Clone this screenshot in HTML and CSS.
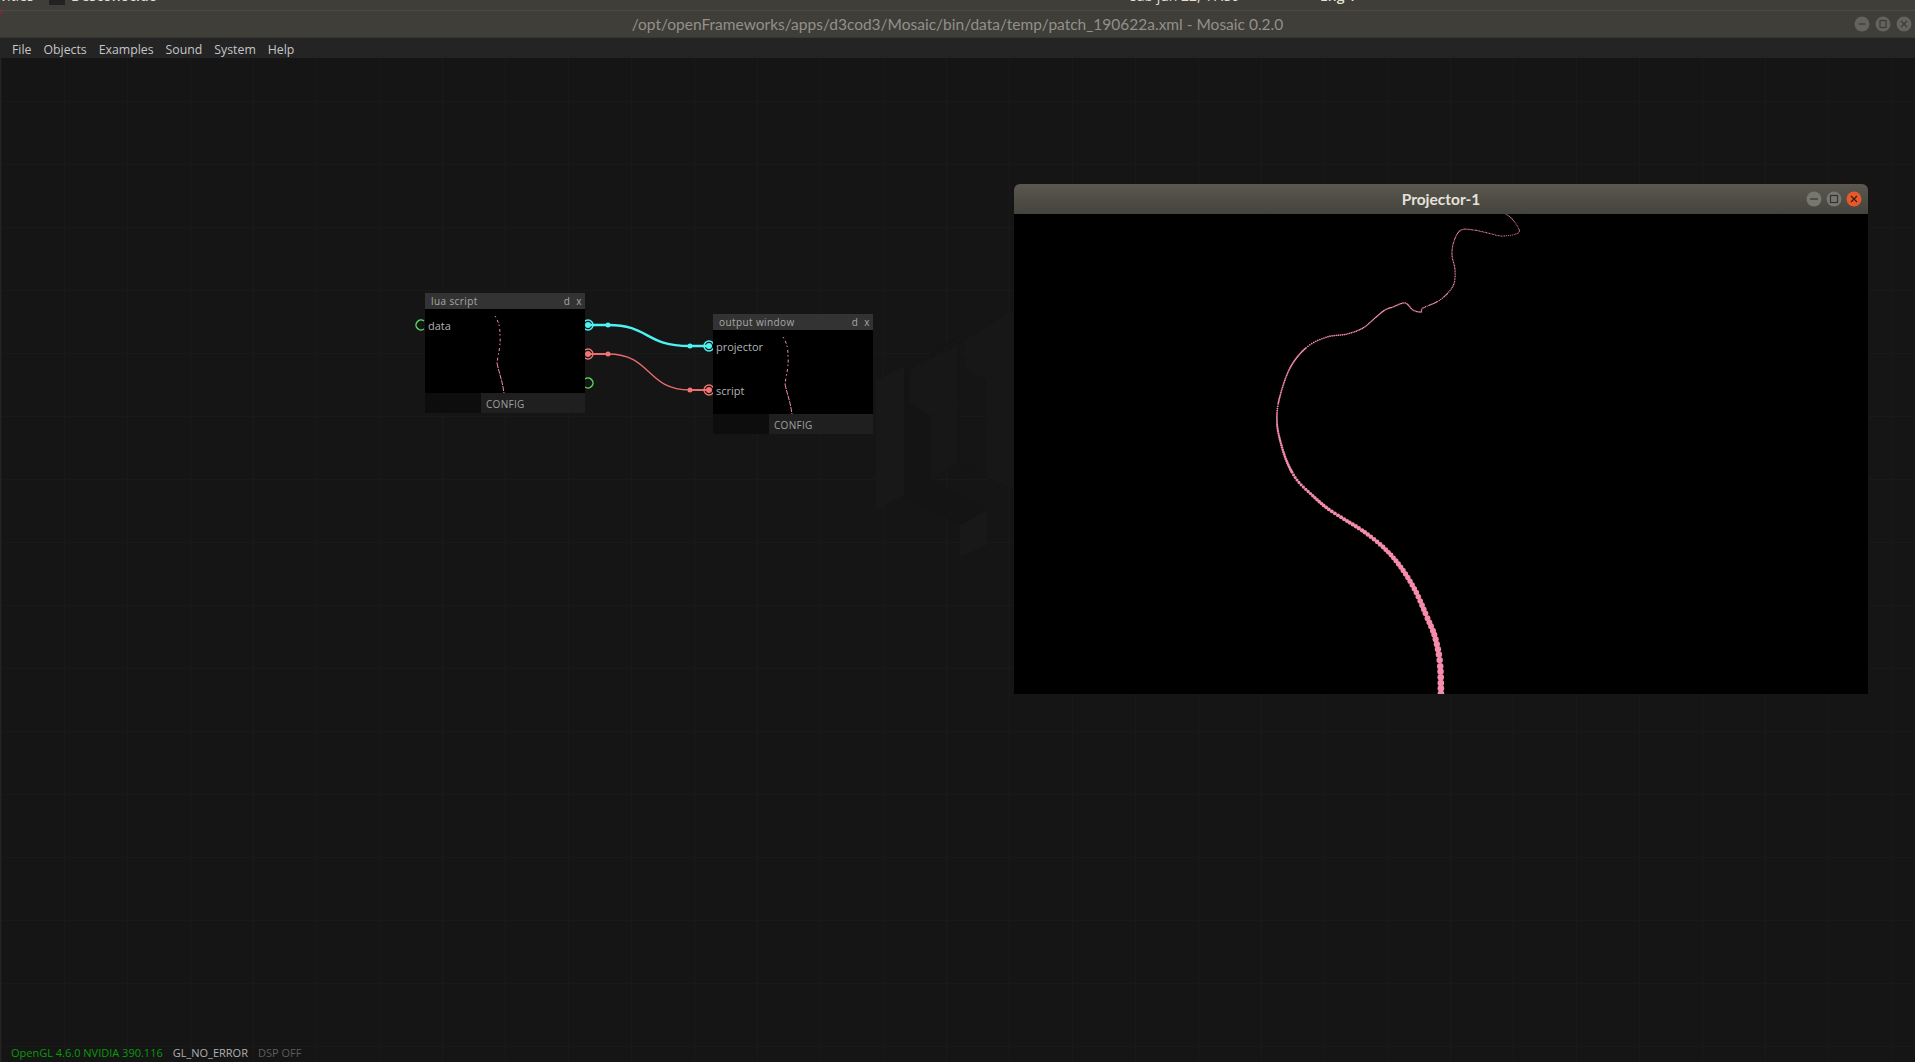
FILE: index.html
```html
<!DOCTYPE html>
<html lang="en">
<head>
  <meta charset="UTF-8">
  <title>Mosaic 0.2.0</title>
  <link rel="stylesheet" href="styles.css">
</head>
<body>
  <div class="toppanel">
    <span class="panel-left">vities</span>
    <span class="panel-icon"></span>
    <span class="panel-app">Desconocido</span>
    <span class="panel-clock">sáb jun 22, 17:39</span>
    <span class="panel-tray">Eng 1</span>
  </div>

  <div class="titlebar">
    <span class="titlebar-text">/opt/openFrameworks/apps/d3cod3/Mosaic/bin/data/temp/patch_190622a.xml - Mosaic 0.2.0</span>
    <div class="wm-buttons">
      <svg class="wm-btn" viewBox="0 0 16 16"><circle cx="8" cy="8" r="7.5" fill="#64635d"/><path d="M4.5 8h7" stroke="#3c3b37" stroke-width="1.2"/></svg>
      <svg class="wm-btn" viewBox="0 0 16 16"><circle cx="8" cy="8" r="7.5" fill="#64635d"/><rect x="5" y="4.5" width="6" height="7" fill="none" stroke="#3c3b37" stroke-width="1.2"/></svg>
      <svg class="wm-btn" viewBox="0 0 16 16"><circle cx="8" cy="8" r="7.5" fill="#64635d"/><path d="M5 5l6 6M11 5l-6 6" stroke="#3c3b37" stroke-width="1.2"/></svg>
    </div>
  </div>

  <nav class="menubar">
    <span>File</span>
    <span>Objects</span>
    <span>Examples</span>
    <span>Sound</span>
    <span>System</span>
    <span>Help</span>
  </nav>

  <main class="canvas">
    <!-- faint logo behind the patch -->
    <svg class="overlay" viewBox="0 58 1915 1004">
      <polygon points="876,381 904,366 904,495 876,510" fill="#181818"/>
      <polygon points="904,495 904,369 910,369 910,403 931,416 931,479 958,462 958,345 960,335 931,352 931,358 960,336 960,462 986,478 986,470 1014,455 1014,490 986,478 958,462 931,479 986,510 960,525 904,495" fill="#141414"/>
      <polygon points="931,416 958,400 958,462 931,479" fill="#171717"/>
      <polygon points="910,369 931,358 958,345 958,400 931,416 910,403" fill="#171717"/>
      <polygon points="965,340 985,328 1014,310 1014,490 987,478 987,380 965,368" fill="#171717"/>
      <polygon points="960,525 987,510 987,545 960,557" fill="#181818"/>
    </svg>

    <svg class="overlay wires" viewBox="0 58 1915 1004">
      <path d="M424 321A5 5 0 1 0 424 329" class="pin-green"/>
      <path d="M585 379A5 5 0 1 1 585 387" class="pin-green"/>

      <path d="M588 325H608C650 325 644 346 690 346H708" class="wire-cyan"/>
      <circle cx="588" cy="325" r="5" class="ring-cyan"/>
      <circle cx="588" cy="325" r="3" fill="#4ff2f2"/>
      <circle cx="608" cy="325" r="2.5" fill="#4ff2f2"/>
      <circle cx="690" cy="346" r="2.5" fill="#4ff2f2"/>
      <circle cx="709" cy="346" r="5" class="ring-cyan"/>
      <circle cx="709" cy="346" r="3" fill="#4ff2f2"/>

      <path d="M588 354H608C652 354 646 390 690 390H709" class="wire-red"/>
      <path d="M590 354H608M690 390H706" class="wire-red-end"/>
      <circle cx="588" cy="354" r="5" class="ring-red"/>
      <circle cx="588" cy="354" r="3" fill="#f27474"/>
      <circle cx="608" cy="354" r="2.5" fill="#f27474"/>
      <circle cx="690" cy="390" r="2.5" fill="#f27474"/>
      <circle cx="709" cy="390" r="5" class="ring-red"/>
      <circle cx="709" cy="390" r="3" fill="#f27474"/>
    </svg>

    <section class="node node-lua">
      <header class="node-head"><span>lua script</span><span class="node-ctrl"><span>d</span><span>x</span></span></header>
      <div class="node-body">
        <span class="pin-label">data</span>
        <svg class="preview" viewBox="0 0 160 84">
          <path class="preview-far" d="M70 7C73 12 75 16 75 26C76 36 73 46 72 54"/>
          <path class="preview-near" d="M72 54C74 64 77 70 79 84"/>
        </svg>
      </div>
      <footer class="node-foot"><span class="foot-blank"></span><span class="foot-config">CONFIG</span></footer>
    </section>

    <section class="node node-output">
      <header class="node-head"><span>output window</span><span class="node-ctrl"><span>d</span><span>x</span></span></header>
      <div class="node-body">
        <span class="pin-label">projector</span>
        <span class="pin-label">script</span>
        <svg class="preview" viewBox="0 0 160 84">
          <path class="preview-far" d="M70 7C73 12 75 16 75 26C76 36 73 46 72 54"/>
          <path class="preview-near" d="M72 54C74 64 77 70 79 84"/>
        </svg>
      </div>
      <footer class="node-foot"><span class="foot-blank"></span><span class="foot-config">CONFIG</span></footer>
    </section>

    <section class="projector">
      <header class="projector-head">
        <span class="projector-title">Projector-1</span>
        <div class="projector-buttons">
          <svg class="wm-btn" viewBox="0 0 16 16"><circle cx="8" cy="8" r="7.5" fill="#77766f"/><path d="M4 8h8" stroke="#34332f" stroke-width="1.2"/></svg>
          <svg class="wm-btn" viewBox="0 0 16 16"><circle cx="8" cy="8" r="7.5" fill="#77766f"/><rect x="4.5" y="4.5" width="7" height="7" fill="none" stroke="#34332f" stroke-width="1.2"/></svg>
          <svg class="wm-btn" viewBox="0 0 16 16"><circle cx="8" cy="8" r="7.5" fill="#e9582b"/><path d="M5 5l6 6M11 5l-6 6" stroke="#34220f" stroke-width="1.3"/></svg>
        </div>
      </header>
      <svg id="trail" class="projector-view" viewBox="1014 214 854 480"></svg>
    </section>

    <footer class="statusbar">
      <span class="status-gl">OpenGL 4.6.0 NVIDIA 390.116</span>
      <span class="status-err">GL_NO_ERROR</span>
      <span class="status-dsp">DSP OFF</span>
    </footer>
  </main>

  <script src="trail.js"></script>
</body>
</html>
```

FILE: styles.css
```css
html,body{
    height: 100%;
    margin: 0;
}
body{
    display: flex;
    flex-direction: column;
    overflow: hidden;
    background: #151515;
    font-family: "Open Sans", "Liberation Sans", sans-serif;
}

.toppanel{
    flex: 0 0 10px;
    display: flex;
    overflow: hidden;
    background: #3f3e38;
    color: #e6dfd0;
    font-size: 14px;
    line-height: 14px;
    white-space: nowrap;
}
.toppanel span{
    margin-top: -11px;
}
.toppanel .panel-icon{
    margin-top: -6px;
}
.panel-left{
    width: 49px;
}
.panel-icon{
    width: 16px;
    height: 11px;
    margin-right: 6px;
    background: #222;
}
.panel-app{
    width: 1059px;
    font-weight: 600;
}
.panel-clock{
    width: 190px;
}
.panel-tray{
    font-weight: 600;
}

.titlebar{
    flex: 0 0 28px;
    display: flex;
    align-items: center;
    justify-content: center;
    position: relative;
    box-sizing: border-box;
    border-top: 1px solid #4a4943;
    border-bottom: 1px solid #37362f;
    background: #3f3e39;
}
.titlebar::before{
    content: "";
    position: absolute;
    left: 0;
    top: 0;
    width: 4px;
    height: 4px;
    background: #8a2038;
    clip-path: polygon(0 0, 100% 0, 0 100%);
}
.titlebar-text{
    font-family: "Lato", "Open Sans", sans-serif;
    font-size: 15.5px;
    color: #92918a;
}
.wm-buttons{
    position: absolute;
    right: 3px;
    top: 5px;
    display: flex;
    gap: 5px;
}
.wm-btn{
    display: block;
    width: 16px;
    height: 16px;
}

.menubar{
    flex: 0 0 20px;
    box-sizing: border-box;
    display: flex;
    align-items: center;
    gap: 12px;
    padding: 3px 0 0 12px;
    background: #242424;
    color: #c6c6c6;
    font-size: 12.3px;
}

.canvas{
    flex: 1;
    position: relative;
    display: flex;
    align-items: flex-end;
    overflow: hidden;
    border-left: 1px solid #2a2226;
    background-color: #151515;
    background-image:
        linear-gradient(#191919 1px, transparent 1px),
        linear-gradient(90deg, #191919 1px, transparent 1px);
    background-size: 63px 63px;
    background-position: 0 -20px;
}
.overlay{
    position: absolute;
    left: -1px;
    top: 0;
    width: 1915px;
    height: 1004px;
    pointer-events: none;
}

.node{
    position: absolute;
    display: flex;
    flex-direction: column;
    width: 160px;
    color: #a8a8a8;
    font-size: 10px;
}
.node-lua{
    left: 424px;
    top: 235px;
}
.node-output{
    left: 712px;
    top: 256px;
}
.node-head{
    display: flex;
    justify-content: space-between;
    align-items: center;
    height: 16px;
    padding: 0 3px 0 6px;
    background: #333;
    letter-spacing: .4px;
}
.node-ctrl{
    display: flex;
    gap: 6px;
}
.node-body{
    position: relative;
    display: flex;
    flex-direction: column;
    gap: 30px;
    box-sizing: border-box;
    height: 84px;
    padding: 10px 0 0 3px;
    background: #000;
}
.pin-label{
    height: 14px;
    line-height: 14px;
    font-size: 11px;
    color: #b4b4b4;
}
.preview{
    position: absolute;
    left: 0;
    top: 0;
    width: 160px;
    height: 84px;
}
.preview path{
    fill: none;
    stroke: #f58cab;
}
.preview-far{
    stroke-width: 1;
    stroke-dasharray: 1.5 3 3 2;
}
.preview-near{
    stroke-width: 1;
    stroke-dasharray: 5 1;
}
.node-foot{
    display: flex;
    height: 20px;
    background: #0d0d0d;
}
.foot-blank{
    width: 56px;
}
.foot-config{
    flex: 1;
    display: flex;
    align-items: center;
    padding: 2px 0 0 5px;
    background: #1f1f1f;
    color: #a0a0a0;
    font-size: 10px;
    letter-spacing: .3px;
}

.wires path{
    fill: none;
}
.wires .pin-green{
    stroke: #58d858;
    stroke-width: 1.5;
}
.wire-cyan{
    stroke: #4ff2f2;
    stroke-width: 2.5;
}
.wire-red{
    stroke: #ec6c6c;
    stroke-width: 1.3;
}
.wire-red-end{
    stroke: #ec6c6c;
    stroke-width: 2;
}
.ring-cyan{
    fill: none;
    stroke: #4ff2f2;
    stroke-width: 1.5;
}
.ring-red{
    fill: none;
    stroke: #f27474;
    stroke-width: 1.3;
}

.projector{
    position: absolute;
    left: 1013px;
    top: 126px;
    width: 854px;
    display: flex;
    flex-direction: column;
}
.projector-head{
    position: relative;
    display: flex;
    align-items: center;
    justify-content: center;
    height: 30px;
    border-radius: 6px 6px 0 0;
    background: linear-gradient(#5a584f, #44433d);
}
.projector-title{
    font-family: "Lato", "Open Sans", sans-serif;
    font-size: 15.5px;
    font-weight: 700;
    color: #e4e2da;
}
.projector-buttons{
    position: absolute;
    right: 6px;
    top: 7px;
    display: flex;
    gap: 4px;
}
.projector-view{
    display: block;
    width: 854px;
    height: 480px;
    background: #000;
}

.statusbar{
    position: relative;
    display: flex;
    gap: 10px;
    padding: 0 0 2px 10px;
    font-size: 11px;
    line-height: 14px;
}
.status-gl{
    color: #0a9a0a;
}
.status-err{
    color: #b0b0b0;
}
.status-dsp{
    color: #5c5c5c;
}
```

FILE: trail.js
```js
// dots along the trail drawn in the projector window, thin at the far end
const trail_points = [
    [1506,214],[1513,220],[1519,232],[1503,236],[1488,233],[1474,230],[1461,230],
    [1454,241],[1452,255],[1455,270],[1453,286],[1440,300],[1423,308],[1421,312],[1413,310],
    [1405,303],[1393,307],[1385,310],[1375,318],[1363,328],[1347,334],[1327,337],[1307,347],
    [1290,368],[1279,400],[1277,422],[1280,440],[1287,462],[1297,480],[1312,495],[1327,508],
    [1347,521],[1363,531],[1383,547],[1400,566],[1415,590],[1427,617],[1435,637],[1440,663],[1441,696]
];

function spline(p0, p1, p2, p3, t)
{
    const f = (a, b, c, d) => 0.5 * (2*b + (c-a)*t + (2*a-5*b+4*c-d)*t*t + (3*b-a-3*c+d)*t*t*t);
    return [f(p0[0],p1[0],p2[0],p3[0]), f(p0[1],p1[1],p2[1],p3[1])];
}

const fine = [];
for (let i = 0; i < trail_points.length - 1; i++)
{
    const p0 = trail_points[Math.max(i-1, 0)];
    const p3 = trail_points[Math.min(i+2, trail_points.length-1)];
    for (let j = 0; j < 20; j++)
        fine.push(spline(p0, trail_points[i], trail_points[i+1], p3, j/20));
}

const trail = document.getElementById('trail');
const total = fine.length;
let next = 0, walked = 0;
for (let i = 1; i < total; i++)
{
    walked += Math.hypot(fine[i][0]-fine[i-1][0], fine[i][1]-fine[i-1][1]);
    if (walked < next)
        continue;
    const u = i / total;
    const r = u < 0.62 ? 0.5 + 0.65*u : 0.9 + (u-0.62)/0.38*2.5;
    const c = document.createElementNS('http://www.w3.org/2000/svg', 'circle');
    c.setAttribute('cx', fine[i][0]);
    c.setAttribute('cy', fine[i][1]);
    c.setAttribute('r', r);
    c.setAttribute('fill', '#f58cab');
    trail.appendChild(c);
    next = walked + Math.max(1, r*1.4);
}
```
